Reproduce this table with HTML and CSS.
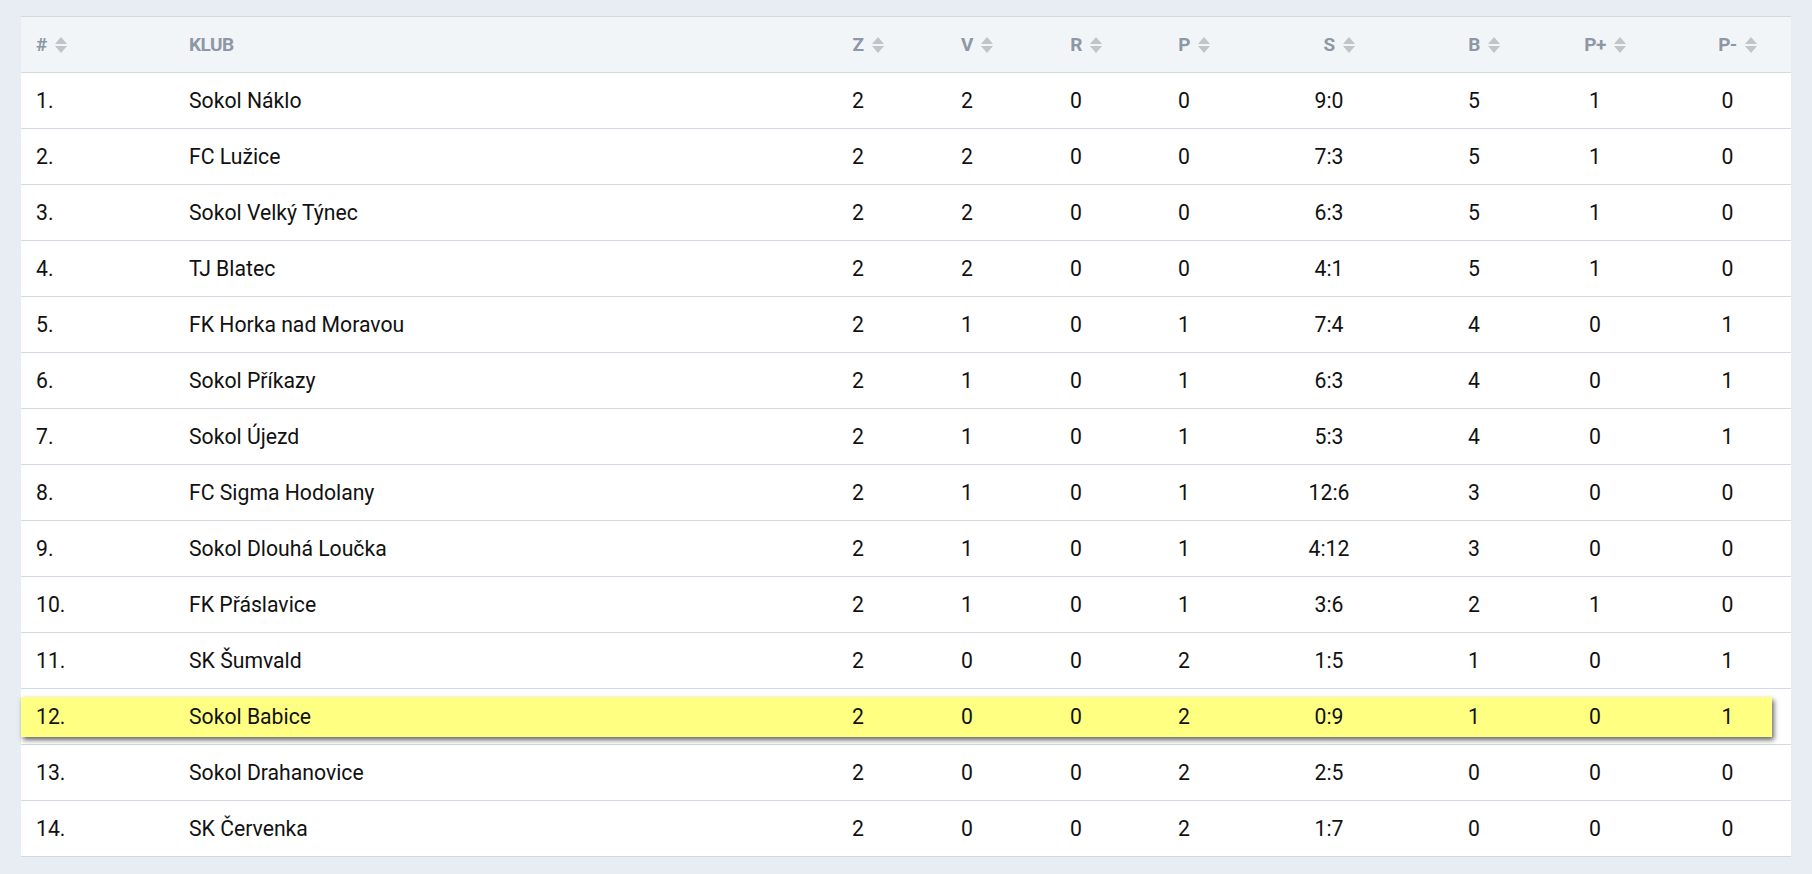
FILE: index.html
```html
<!DOCTYPE html>
<html lang="cs">
<head>
<meta charset="utf-8">
<title>Tabulka</title>
<link rel="stylesheet" href="styles.css">
</head>
<body>
<div class="table">
  <div class="row head">
    <div class="cell left"><span class="lbl">#</span><svg class="sort" viewBox="0 0 12 18"><path d="M0 8 L6 1 L12 8 Z M0 10 L6 17 L12 10 Z"/></svg></div>
    <div class="cell left"><span class="lbl">KLUB</span></div>
    <div class="cell"><span class="lbl">Z</span><svg class="sort" viewBox="0 0 12 18"><path d="M0 8 L6 1 L12 8 Z M0 10 L6 17 L12 10 Z"/></svg></div>
    <div class="cell"><span class="lbl">V</span><svg class="sort" viewBox="0 0 12 18"><path d="M0 8 L6 1 L12 8 Z M0 10 L6 17 L12 10 Z"/></svg></div>
    <div class="cell"><span class="lbl">R</span><svg class="sort" viewBox="0 0 12 18"><path d="M0 8 L6 1 L12 8 Z M0 10 L6 17 L12 10 Z"/></svg></div>
    <div class="cell"><span class="lbl">P</span><svg class="sort" viewBox="0 0 12 18"><path d="M0 8 L6 1 L12 8 Z M0 10 L6 17 L12 10 Z"/></svg></div>
    <div class="cell"><span class="lbl">S</span><svg class="sort" viewBox="0 0 12 18"><path d="M0 8 L6 1 L12 8 Z M0 10 L6 17 L12 10 Z"/></svg></div>
    <div class="cell"><span class="lbl">B</span><svg class="sort" viewBox="0 0 12 18"><path d="M0 8 L6 1 L12 8 Z M0 10 L6 17 L12 10 Z"/></svg></div>
    <div class="cell"><span class="lbl">P+</span><svg class="sort" viewBox="0 0 12 18"><path d="M0 8 L6 1 L12 8 Z M0 10 L6 17 L12 10 Z"/></svg></div>
    <div class="cell"><span class="lbl">P-</span><svg class="sort" viewBox="0 0 12 18"><path d="M0 8 L6 1 L12 8 Z M0 10 L6 17 L12 10 Z"/></svg></div>
  </div>
  <div class="row"><div class="cell left">1.</div><div class="cell left">Sokol Náklo</div><div class="cell">2</div><div class="cell">2</div><div class="cell">0</div><div class="cell">0</div><div class="cell">9:0</div><div class="cell">5</div><div class="cell">1</div><div class="cell">0</div></div>
  <div class="row"><div class="cell left">2.</div><div class="cell left">FC Lužice</div><div class="cell">2</div><div class="cell">2</div><div class="cell">0</div><div class="cell">0</div><div class="cell">7:3</div><div class="cell">5</div><div class="cell">1</div><div class="cell">0</div></div>
  <div class="row"><div class="cell left">3.</div><div class="cell left">Sokol Velký Týnec</div><div class="cell">2</div><div class="cell">2</div><div class="cell">0</div><div class="cell">0</div><div class="cell">6:3</div><div class="cell">5</div><div class="cell">1</div><div class="cell">0</div></div>
  <div class="row"><div class="cell left">4.</div><div class="cell left">TJ Blatec</div><div class="cell">2</div><div class="cell">2</div><div class="cell">0</div><div class="cell">0</div><div class="cell">4:1</div><div class="cell">5</div><div class="cell">1</div><div class="cell">0</div></div>
  <div class="row"><div class="cell left">5.</div><div class="cell left">FK Horka nad Moravou</div><div class="cell">2</div><div class="cell">1</div><div class="cell">0</div><div class="cell">1</div><div class="cell">7:4</div><div class="cell">4</div><div class="cell">0</div><div class="cell">1</div></div>
  <div class="row"><div class="cell left">6.</div><div class="cell left">Sokol Příkazy</div><div class="cell">2</div><div class="cell">1</div><div class="cell">0</div><div class="cell">1</div><div class="cell">6:3</div><div class="cell">4</div><div class="cell">0</div><div class="cell">1</div></div>
  <div class="row"><div class="cell left">7.</div><div class="cell left">Sokol Újezd</div><div class="cell">2</div><div class="cell">1</div><div class="cell">0</div><div class="cell">1</div><div class="cell">5:3</div><div class="cell">4</div><div class="cell">0</div><div class="cell">1</div></div>
  <div class="row"><div class="cell left">8.</div><div class="cell left">FC Sigma Hodolany</div><div class="cell">2</div><div class="cell">1</div><div class="cell">0</div><div class="cell">1</div><div class="cell">12:6</div><div class="cell">3</div><div class="cell">0</div><div class="cell">0</div></div>
  <div class="row"><div class="cell left">9.</div><div class="cell left">Sokol Dlouhá Loučka</div><div class="cell">2</div><div class="cell">1</div><div class="cell">0</div><div class="cell">1</div><div class="cell">4:12</div><div class="cell">3</div><div class="cell">0</div><div class="cell">0</div></div>
  <div class="row"><div class="cell left">10.</div><div class="cell left">FK Přáslavice</div><div class="cell">2</div><div class="cell">1</div><div class="cell">0</div><div class="cell">1</div><div class="cell">3:6</div><div class="cell">2</div><div class="cell">1</div><div class="cell">0</div></div>
  <div class="row"><div class="cell left">11.</div><div class="cell left">SK Šumvald</div><div class="cell">2</div><div class="cell">0</div><div class="cell">0</div><div class="cell">2</div><div class="cell">1:5</div><div class="cell">1</div><div class="cell">0</div><div class="cell">1</div></div>
  <div class="row hl"><div class="cell left">12.</div><div class="cell left">Sokol Babice</div><div class="cell">2</div><div class="cell">0</div><div class="cell">0</div><div class="cell">2</div><div class="cell">0:9</div><div class="cell">1</div><div class="cell">0</div><div class="cell">1</div></div>
  <div class="row"><div class="cell left">13.</div><div class="cell left">Sokol Drahanovice</div><div class="cell">2</div><div class="cell">0</div><div class="cell">0</div><div class="cell">2</div><div class="cell">2:5</div><div class="cell">0</div><div class="cell">0</div><div class="cell">0</div></div>
  <div class="row"><div class="cell left">14.</div><div class="cell left">SK Červenka</div><div class="cell">2</div><div class="cell">0</div><div class="cell">0</div><div class="cell">2</div><div class="cell">1:7</div><div class="cell">0</div><div class="cell">0</div><div class="cell">0</div></div>
</div>
</body>
</html>
```
FILE: styles.css
```css
html, body {
  margin: 0;
  padding: 0;
}
body {
  background: #e8edf4;
  padding: 16px 21px 17px;
  font-family: Roboto, "Noto Sans", sans-serif;
  color: #111111;
}
.table {
  background: #ffffff;
  border-top: 1px solid #d3d9e2;
}
.row {
  display: grid;
  grid-template-columns: 153px 628px 112px 106px 112px 104px 186px 104px 138px 127px;
  height: 55px;
  border-bottom: 1px solid #d3d9e2;
  font-size: 21.2px;
  position: relative;
}
.cell {
  display: flex;
  align-items: center;
  justify-content: center;
  white-space: nowrap;
  position: relative;
  z-index: 1;
}
.cell.left {
  justify-content: flex-start;
  padding-left: 15px;
}
.head {
  background: #f2f5f8;
  font-weight: 700;
  font-size: 19px;
  letter-spacing: -0.5px;
  color: #8d97a5;
}
.sort {
  width: 12px;
  height: 18px;
  margin-left: 8px;
  margin-right: -20px;
  fill: #c0c4cb;
}
.cell.left .sort {
  margin-right: 0;
}
.hl::before {
  content: "";
  position: absolute;
  left: 0;
  right: 19px;
  top: 8px;
  height: 40px;
  background: #ffff82;
  box-shadow: 2px 3px 5px rgba(0, 0, 0, 0.6);
  z-index: 0;
}
```
